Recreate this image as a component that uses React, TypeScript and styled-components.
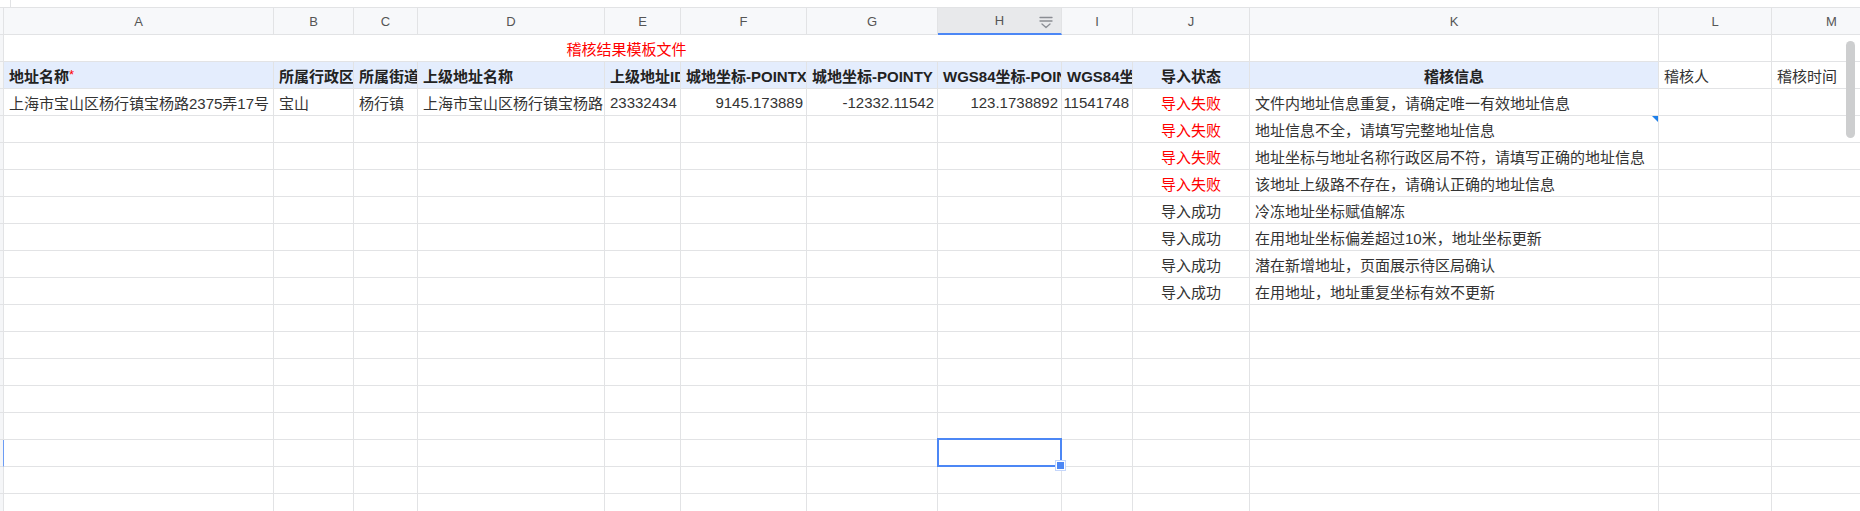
import React from "react";
import styled, { createGlobalStyle, css } from "styled-components";

const GlobalStyle = createGlobalStyle`
  html, body { margin: 0; padding: 0; background: #fff; }
  body {
    font-family: "Liberation Sans", Arial, "Noto Sans CJK SC", sans-serif;
  }
  * { box-sizing: border-box; }
`;

const LINE = "#e2e3e5";
const BLUE = "#4c87f5";
const HEAD_BG = "#e4edfd";
const RED = "#ff0000";

const COL_WIDTHS = [4, 270, 80, 64, 187, 76, 126, 131, 124, 71, 117, 409, 113, 120];
const LETTERS = ["A", "B", "C", "D", "E", "F", "G", "H", "I", "J", "K", "L", "M"];
const ACTIVE_COL = 7; // H
const ACTIVE_ROW = 16;
const TOTAL_ROWS = 18;

type Align = "left" | "center" | "right";

interface CellDef {
  text?: React.ReactNode;
  align?: Align;
  bold?: boolean;
  color?: string;
  bg?: string;
  span?: number;
  comment?: boolean;
  num?: boolean;
}

const Page = styled.div`
  position: relative;
  width: 1860px;
  height: 511px;
  overflow: hidden;
  background: #fff;
`;

const TopStrip = styled.div`
  height: 7px;
  display: flex;
`;

const StripTick = styled.div`
  margin-left: 10px;
  width: 1px;
  background: ${LINE};
`;

const Sheet = styled.div`
  display: grid;
  grid-template-columns: ${COL_WIDTHS.map((w) => `${w}px`).join(" ")};
  grid-auto-rows: 27px;
  border-top: 1px solid ${LINE};
  width: max-content;
`;

const Corner = styled.div`
  background: #f7f8fa;
  border-right: 1px solid ${LINE};
  border-bottom: 1px solid ${LINE};
`;

const ColHead = styled.div<{ $active?: boolean }>`
  position: relative;
  display: flex;
  align-items: center;
  justify-content: center;
  background: ${(p) => (p.$active ? "#e8e9eb" : "#f7f8fa")};
  border-right: 1px solid ${LINE};
  border-bottom: ${(p) => (p.$active ? `2px solid ${BLUE}` : `1px solid ${LINE}`)};
  font-size: 13px;
  color: #555;
  overflow: hidden;
`;

const FilterIcon = styled.svg`
  position: absolute;
  right: 8px;
  top: 8px;
  width: 14px;
  height: 13px;
`;

const RowHead = styled.div<{ $active?: boolean }>`
  background: #f5f6f8;
  border-right: 1px solid ${(p) => (p.$active ? "#6c9cf4" : LINE)};
  border-bottom: 1px solid ${LINE};
`;

const Cell = styled.div<{
  $align?: Align;
  $bold?: boolean;
  $bg?: string;
  $color?: string;
  $span?: number;
  $comment?: boolean;
  $num?: boolean;
  $overlay?: boolean;
}>`
  position: relative;
  display: flex;
  align-items: center;
  justify-content: ${(p) =>
    p.$align === "center" ? "center" : p.$align === "right" ? "flex-end" : "flex-start"};
  padding: ${(p) => (p.$num ? "0 3px 0 0" : "0 5px")};
  min-width: 0;
  overflow: ${(p) => (p.$overlay ? "visible" : "hidden")};
  white-space: nowrap;
  border-right: 1px solid ${LINE};
  border-bottom: 1px solid ${LINE};
  background: ${(p) => p.$bg ?? "#fff"};
  color: ${(p) => p.$color ?? "#333"};
  font-size: 15px;
  font-weight: ${(p) => (p.$bold ? 700 : 400)};
  ${(p) =>
    p.$span &&
    css`
      grid-column: span ${p.$span};
    `}
  ${(p) =>
    p.$comment &&
    css`
      &::after {
        content: "";
        position: absolute;
        top: 0;
        right: 0;
        width: 0;
        height: 0;
        border-top: 6px solid #1f80ea;
        border-left: 6px solid transparent;
      }
    `}
`;

const Required = styled.span`
  color: ${RED};
  font-weight: 400;
  align-self: flex-start;
  margin-top: 5px;
  font-size: 13px;
`;

const Selection = styled.div`
  position: absolute;
  top: -2px;
  left: -1px;
  right: -1px;
  bottom: -1px;
  border: 2px solid ${BLUE};
  z-index: 2;
  pointer-events: none;
`;

const FillHandle = styled.div`
  position: absolute;
  right: -5px;
  bottom: -5px;
  width: 11px;
  height: 11px;
  background: #fff;
  border: 1px solid #c4d6fb;
  padding: 1px;
  z-index: 3;

  &::after {
    content: "";
    display: block;
    width: 100%;
    height: 100%;
    background: ${BLUE};
  }
`;

const ScrollThumb = styled.div`
  position: absolute;
  top: 41px;
  right: 5px;
  width: 9px;
  height: 97px;
  border-radius: 5px;
  background: #cdcecf;
  z-index: 5;
`;

const headerRow: CellDef[] = [
  {
    text: (
      <>
        地址名称<Required>*</Required>
      </>
    ),
    bold: true,
    bg: HEAD_BG,
    color: "#222",
  },
  { text: "所属行政区", bold: true, bg: HEAD_BG, color: "#222" },
  { text: "所属街道", bold: true, bg: HEAD_BG, color: "#222" },
  { text: "上级地址名称", bold: true, bg: HEAD_BG, color: "#222" },
  { text: "上级地址ID", bold: true, bg: HEAD_BG, color: "#222" },
  { text: "城地坐标-POINTX", bold: true, bg: HEAD_BG, color: "#222" },
  { text: "城地坐标-POINTY", bold: true, bg: HEAD_BG, color: "#222" },
  { text: "WGS84坐标-POINTX", bold: true, bg: HEAD_BG, color: "#222" },
  { text: "WGS84坐标-POINTY", bold: true, bg: HEAD_BG, color: "#222" },
  { text: "导入状态", bold: true, bg: HEAD_BG, color: "#222", align: "center" },
  { text: "稽核信息", bold: true, bg: HEAD_BG, color: "#222", align: "center" },
  { text: "稽核人" },
  { text: "稽核时间" },
];

const results: { status: string; ok: boolean; info: string; comment?: boolean }[] = [
  { status: "导入失败", ok: false, info: "文件内地址信息重复，请确定唯一有效地址信息" },
  { status: "导入失败", ok: false, info: "地址信息不全，请填写完整地址信息", comment: true },
  { status: "导入失败", ok: false, info: "地址坐标与地址名称行政区局不符，请填写正确的地址信息" },
  { status: "导入失败", ok: false, info: "该地址上级路不存在，请确认正确的地址信息" },
  { status: "导入成功", ok: true, info: "冷冻地址坐标赋值解冻" },
  { status: "导入成功", ok: true, info: "在用地址坐标偏差超过10米，地址坐标更新" },
  { status: "导入成功", ok: true, info: "潜在新增地址，页面展示待区局确认" },
  { status: "导入成功", ok: true, info: "在用地址，地址重复坐标有效不更新" },
];

const firstData: CellDef[] = [
  { text: "上海市宝山区杨行镇宝杨路2375弄17号" },
  { text: "宝山" },
  { text: "杨行镇" },
  { text: "上海市宝山区杨行镇宝杨路" },
  { text: "23332434" },
  { text: "9145.173889", align: "right", num: true },
  { text: "-12332.11542", align: "right", num: true },
  { text: "123.1738892", align: "right", num: true },
  { text: "11541748", align: "right", num: true },
];

function buildRows(): CellDef[][] {
  const rows: CellDef[][] = [];
  rows.push([
    { text: "稽核结果模板文件", color: RED, align: "center", span: 10 },
    {},
    {},
    {},
  ]);
  rows.push(headerRow);
  results.forEach((r, i) => {
    const lead: CellDef[] = i === 0 ? firstData : Array.from({ length: 9 }, () => ({}));
    rows.push([
      ...lead,
      { text: r.status, align: "center", color: r.ok ? "#333" : RED },
      { text: r.info, comment: r.comment },
      {},
      {},
    ]);
  });
  while (rows.length < TOTAL_ROWS) {
    rows.push(Array.from({ length: 13 }, () => ({})));
  }
  return rows;
}

const rows = buildRows();

const FilterGlyph = () => (
  <FilterIcon viewBox="0 0 14 13" fill="none" stroke="#8a8d93" strokeWidth="1.3" strokeLinecap="round" strokeLinejoin="round">
    <path d="M1 1.5h12" />
    <path d="M1 5h12" />
    <path d="M3 8l4 3.5 4-3.5" />
  </FilterIcon>
);

export default function App() {
  return (
    <>
      <GlobalStyle />
      <Page>
        <TopStrip>
          <StripTick />
        </TopStrip>
        <Sheet>
          <Corner />
          {LETTERS.map((l, i) => (
            <ColHead key={l} $active={i === ACTIVE_COL}>
              {l}
              {i === ACTIVE_COL && <FilterGlyph />}
            </ColHead>
          ))}
          {rows.map((row, ri) => {
            const rowNo = ri + 1;
            let colIdx = 0;
            return (
              <React.Fragment key={ri}>
                <RowHead $active={rowNo === ACTIVE_ROW} />
                {row.map((c, ci) => {
                  const isSel = rowNo === ACTIVE_ROW && colIdx === ACTIVE_COL;
                  colIdx += c.span ?? 1;
                  return (
                    <Cell
                      key={ci}
                      $align={c.align}
                      $bold={c.bold}
                      $bg={c.bg}
                      $color={c.color}
                      $span={c.span}
                      $comment={c.comment}
                      $num={c.num}
                      $overlay={isSel}
                    >
                      {c.text}
                      {isSel && (
                        <>
                          <Selection />
                          <FillHandle />
                        </>
                      )}
                    </Cell>
                  );
                })}
              </React.Fragment>
            );
          })}
        </Sheet>
        <ScrollThumb />
      </Page>
    </>
  );
}
